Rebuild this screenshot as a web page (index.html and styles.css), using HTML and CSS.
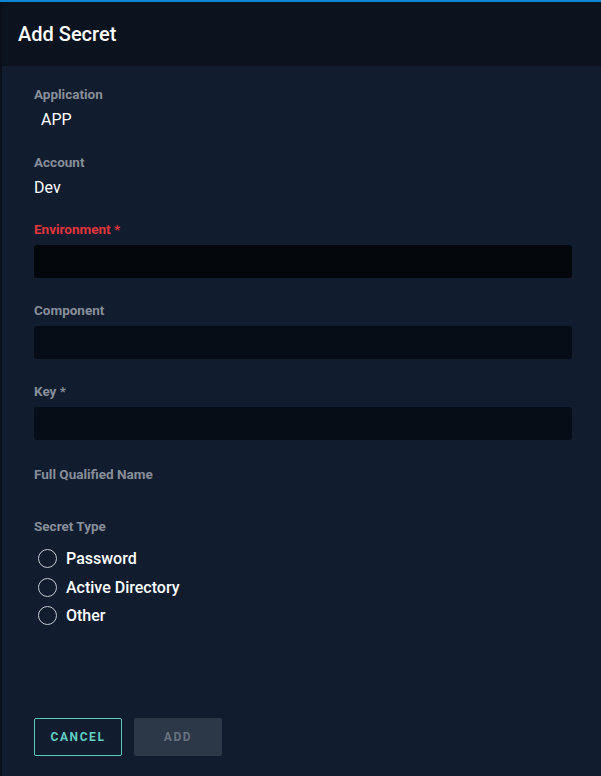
FILE: index.html
```html
<!DOCTYPE html>
<html>
<head>
<meta charset="utf-8">
<link rel="stylesheet" href="styles.css">
</head>
<body>
<div class="topbar"></div>
<div class="frame">
  <div class="edge"></div>
  <div class="modal">
    <div class="header"><h1 class="title">Add Secret</h1></div>
    <div class="body">
      <div class="form">
        <div class="field">
          <div class="label">Application</div>
          <div class="value indent">APP</div>
        </div>
        <div class="field">
          <div class="label">Account</div>
          <div class="value">Dev</div>
        </div>
        <div class="field">
          <div class="label required">Environment *</div>
          <div class="input focus"></div>
        </div>
        <div class="field">
          <div class="label">Component</div>
          <div class="input"></div>
        </div>
        <div class="field">
          <div class="label">Key *</div>
          <div class="input"></div>
        </div>
        <div class="field fqn">
          <div class="label">Full Qualified Name</div>
        </div>
        <div class="field">
          <div class="label">Secret Type</div>
          <div class="radios">
            <label class="radio"><span class="circle"></span><span class="rtext">Password</span></label>
            <label class="radio"><span class="circle"></span><span class="rtext">Active Directory</span></label>
            <label class="radio"><span class="circle"></span><span class="rtext">Other</span></label>
          </div>
        </div>
      </div>
      <div class="footer">
        <button class="btn cancel">CANCEL</button>
        <button class="btn add">ADD</button>
      </div>
    </div>
  </div>
</div>
</body>
</html>
```

FILE: styles.css
```css
html, body {
  margin: 0;
  padding: 0;
}
body {
  width: 601px;
  height: 776px;
  overflow: hidden;
  background: #111c2e;
  font-family: Roboto, "Liberation Sans", sans-serif;
}
.topbar {
  height: 2px;
  background: #0a86d4;
}
.frame {
  display: flex;
  height: 774px;
}
.edge {
  width: 2px;
  background: #0a1019;
}
.modal {
  flex: 1;
  display: flex;
  flex-direction: column;
}
.header {
  height: 64px;
  background: #0b131e;
  display: flex;
  align-items: center;
  padding-left: 16px;
}
.title {
  margin: 0;
  font-size: 20px;
  font-weight: 500;
  color: #ffffff;
  line-height: 24px;
}
.body {
  flex: 1;
  display: flex;
  flex-direction: column;
  background: #111d2f;
  padding: 20px 29px 20px 32px;
}
.form {
  display: flex;
  flex-direction: column;
  gap: 24px;
}
.field {
  display: flex;
  flex-direction: column;
  gap: 8px;
}
.label {
  font-size: 13.5px;
  font-weight: 700;
  line-height: 16px;
  color: #878e99;
}
.label.required {
  color: #e3353b;
  margin-top: -1px;
}
.value {
  font-size: 16px;
  line-height: 20px;
  color: #ffffff;
}
.value.indent {
  padding-left: 7px;
}
.input {
  height: 33px;
  border-radius: 3px;
  background: #070d16;
}
.input.focus {
  background: #03070c;
}
.fqn {
  margin-top: 2px;
  margin-bottom: 12px;
}
.radios {
  display: flex;
  flex-direction: column;
  padding-top: 2px;
}
.radio {
  height: 28.75px;
  display: flex;
  align-items: center;
  gap: 9px;
  padding-left: 4px;
}
.circle {
  width: 17px;
  height: 17px;
  border: 1.5px solid #c3c7cd;
  border-radius: 50%;
}
.rtext {
  font-size: 16px;
  font-weight: 500;
  color: #ffffff;
}
.footer {
  margin-top: auto;
  display: flex;
  gap: 12px;
}
.btn {
  width: 88px;
  height: 38px;
  border-radius: 2px;
  font-family: Roboto, "Liberation Sans", sans-serif;
  font-size: 12px;
  font-weight: 700;
  letter-spacing: 1.6px;
  padding: 0;
}
.cancel {
  background: transparent;
  border: 1px solid #5cc8bc;
  color: #62cec2;
}
.add {
  background: #2c3747;
  border: none;
  color: #68727f;
}
```
